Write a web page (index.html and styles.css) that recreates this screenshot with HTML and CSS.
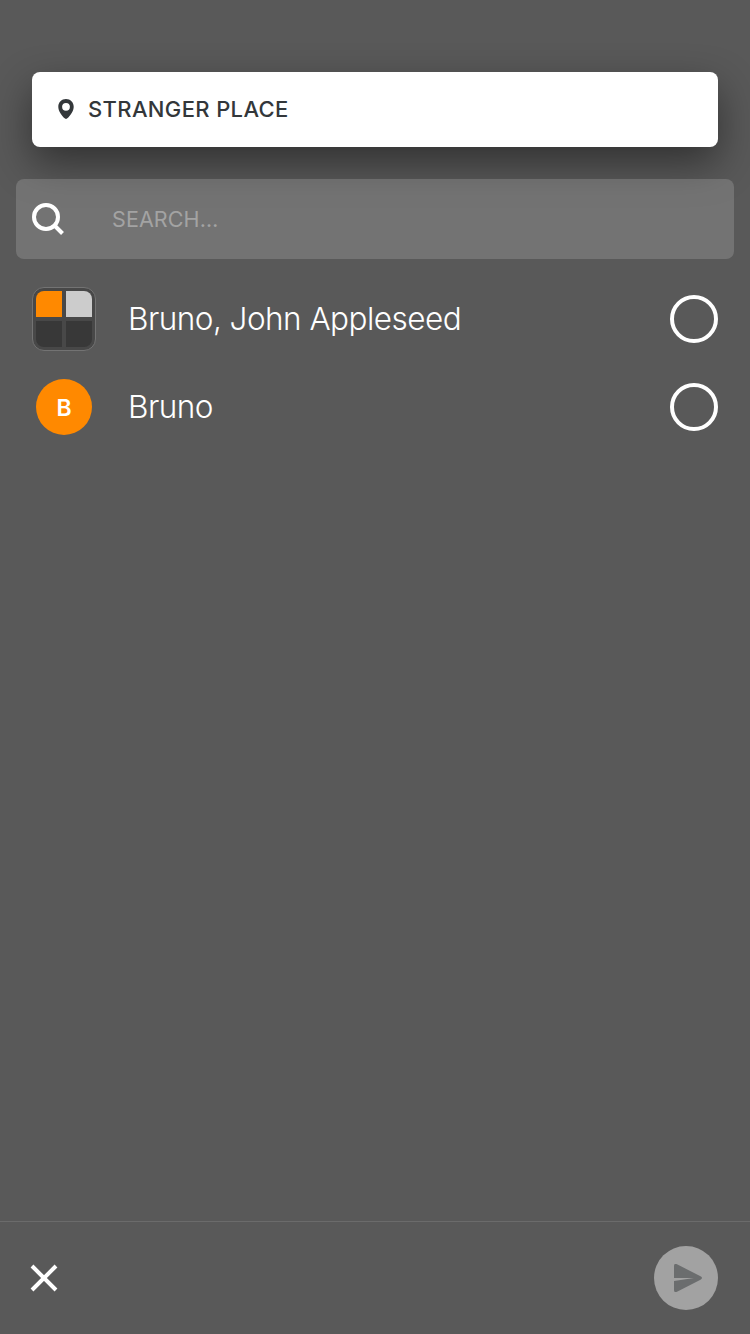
FILE: index.html
```html
<!DOCTYPE html>
<html lang="en">
<head>
<meta charset="utf-8">
<title>Share location</title>
<link rel="stylesheet" href="styles.css">
</head>
<body>
<main class="screen">
  <header class="place">
    <svg class="pin" width="16" height="21" viewBox="0 0 16 21"><path fill="#33373a" fill-rule="evenodd" d="M8 0C3.600 0 .3 3.300 .3 7.700C.3 12 3.400 16.400 7 19.600Q8 20.400 9 19.600C12.600 16.400 15.700 12 15.700 7.700C15.700 3.300 12.400 0 8 0ZM8 3.900a3.900 3.900 0 1 1 0 7.800a3.900 3.900 0 0 1 0-7.800Z"/></svg>
    <span class="place-name">STRANGER PLACE</span>
  </header>
  <div class="search">
    <svg class="search-icon" width="32" height="32" viewBox="0 0 32 32" fill="none" stroke="#fff" stroke-width="4"><circle cx="14" cy="14" r="12"/><path d="M22 22L30.500 30.500"/></svg>
    <span class="search-hint">SEARCH…</span>
  </div>
  <ul class="list">
    <li class="row">
      <div class="group"><i class="tile orange"></i><i class="tile light"></i><i class="tile"></i><i class="tile"></i></div>
      <span class="name">Bruno, John Appleseed</span>
      <span class="check"></span>
    </li>
    <li class="row">
      <div class="avatar">B</div>
      <span class="name">Bruno</span>
      <span class="check"></span>
    </li>
  </ul>
  <footer class="bar">
    <svg width="28" height="28" viewBox="0 0 28 28" stroke="#fff" stroke-width="4" fill="none"><path d="M2 2L26 26M26 2L2 26"/></svg>
    <div class="send"><svg width="28" height="28" viewBox="0 0 28 28" fill="#6b6d6e"><path d="M0 14V2Q0-1 3 .2L26.500 12.300Q29.500 14 26.500 15.700L3 27.800Q0 29 0 26V17L20 14Z"/></svg></div>
  </footer>
</main>
</body>
</html>
```

FILE: styles.css
```css
* { box-sizing: border-box; }
body { margin: 0; background: #595959; color: #fff; font-family: Inter, "Liberation Sans", sans-serif; }
svg { display: block; flex: none; }
.screen { height: 1334px; padding-top: 72px; display: flex; flex-direction: column; overflow: hidden; }
.place { height: 75px; flex: none; margin: 0 32px; padding-left: 26px; display: flex; align-items: center; gap: 14px; background: #fff; border-radius: 8px; box-shadow: 0 16px 40px rgba(0, 0, 0, .45); color: #33373a; }
.place-name { padding-bottom: 1px; font-size: 22px; font-weight: 550; letter-spacing: .36px; }
.search { height: 80px; flex: none; margin: 32px 16px 0; padding-left: 16px; display: flex; align-items: center; gap: 48px; background: rgba(255, 255, 255, .16); border-radius: 8px; }
.search-hint { font-size: 21.5px; letter-spacing: .1px; color: #a3a3a3; }
.list { list-style: none; margin: 16px 0 0; padding: 0; flex: 1; }
.row { height: 88px; padding: 0 32px; display: flex; align-items: center; }
.group { width: 64px; height: 64px; padding: 3px; display: grid; grid-template-columns: 26px 26px; grid-template-rows: 26px 26px; gap: 4px; background: #484848; border: 1px solid #737373; border-radius: 12px; }
.tile { background: #383838; }
.tile:nth-child(1) { border-top-left-radius: 8px; }
.tile:nth-child(2) { border-top-right-radius: 8px; }
.tile:nth-child(3) { border-bottom-left-radius: 8px; }
.tile:nth-child(4) { border-bottom-right-radius: 8px; }
.tile.orange { background: #ff8900; }
.tile.light { background: #ccc; }
.avatar { width: 56px; height: 56px; margin: 0 4px; padding-top: 1px; border-radius: 50%; background: #ff8900; display: flex; align-items: center; justify-content: center; font-size: 23px; font-weight: 600; }
.name { flex: 1; margin-left: 32px; padding-bottom: 2px; font-size: 31.5px; font-weight: 300; letter-spacing: -.53px; white-space: nowrap; }
.check { width: 48px; height: 48px; border: 4px solid #fff; border-radius: 50%; }
.bar { height: 113px; flex: none; border-top: 1px solid #6b6b6b; padding: 0 32px 0 30px; display: flex; align-items: center; justify-content: space-between; }
.send { width: 64px; height: 64px; padding-left: 20px; border-radius: 50%; background: #a2a2a2; display: flex; align-items: center; }
```
